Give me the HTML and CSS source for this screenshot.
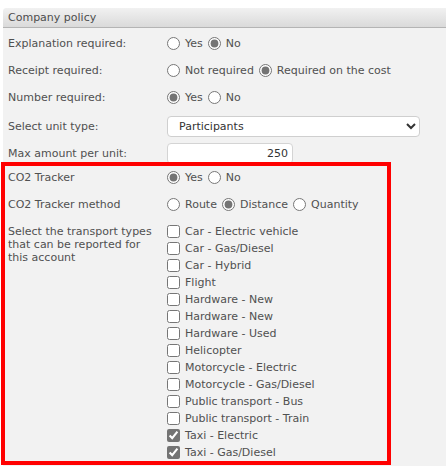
FILE: index.html
```html
<!DOCTYPE html>
<html lang="en">
<head>
  <meta charset="UTF-8">
  <meta name="viewport" content="width=device-width, initial-scale=1.0">
  <title>Company policy</title>
  <link rel="stylesheet" href="styles.css">
</head>
<body>
  <div class="panel">
    <div class="panel-head">Company policy</div>
    <div class="panel-body">
      <div class="row h27">
        <div class="label">Explanation required:</div>
        <div class="field">
          <label class="opt"><input type="radio" name="expl"> Yes</label>
          <label class="opt"><input type="radio" name="expl" checked> No</label>
        </div>
      </div>
      <div class="row h27">
        <div class="label">Receipt required:</div>
        <div class="field">
          <label class="opt"><input type="radio" name="receipt"> Not required</label>
          <label class="opt"><input type="radio" name="receipt" checked> Required on the cost</label>
        </div>
      </div>
      <div class="row h27">
        <div class="label">Number required:</div>
        <div class="field">
          <label class="opt"><input type="radio" name="number" checked> Yes</label>
          <label class="opt"><input type="radio" name="number"> No</label>
        </div>
      </div>
      <div class="row h31">
        <div class="label">Select unit type:</div>
        <div class="field">
          <select class="unit-select">
            <option>Participants</option>
          </select>
        </div>
      </div>
      <div class="row h22">
        <div class="label">Max amount per unit:</div>
        <div class="field">
          <input class="amount" type="text" value="250">
        </div>
      </div>
      <div class="row h26">
        <div class="label">CO2 Tracker</div>
        <div class="field">
          <label class="opt"><input type="radio" name="co2" checked> Yes</label>
          <label class="opt"><input type="radio" name="co2"> No</label>
        </div>
      </div>
      <div class="row h28">
        <div class="label">CO2 Tracker method</div>
        <div class="field">
          <label class="opt"><input type="radio" name="method"> Route</label>
          <label class="opt"><input type="radio" name="method" checked> Distance</label>
          <label class="opt"><input type="radio" name="method"> Quantity</label>
        </div>
      </div>
      <div class="row top">
        <div class="label multi">Select the transport types that can be reported for this account</div>
        <div class="checklist">
          <label class="check"><input type="checkbox"> Car - Electric vehicle</label>
          <label class="check"><input type="checkbox"> Car - Gas/Diesel</label>
          <label class="check"><input type="checkbox"> Car - Hybrid</label>
          <label class="check"><input type="checkbox"> Flight</label>
          <label class="check"><input type="checkbox"> Hardware - New</label>
          <label class="check"><input type="checkbox"> Hardware - New</label>
          <label class="check"><input type="checkbox"> Hardware - Used</label>
          <label class="check"><input type="checkbox"> Helicopter</label>
          <label class="check"><input type="checkbox"> Motorcycle - Electric</label>
          <label class="check"><input type="checkbox"> Motorcycle - Gas/Diesel</label>
          <label class="check"><input type="checkbox"> Public transport - Bus</label>
          <label class="check"><input type="checkbox"> Public transport - Train</label>
          <label class="check"><input type="checkbox" checked> Taxi - Electric</label>
          <label class="check"><input type="checkbox" checked> Taxi - Gas/Diesel</label>
        </div>
      </div>
    </div>
  </div>

  <!-- annotation frame around the CO2 section -->
  <div class="highlight"></div>
</body>
</html>
```

FILE: styles.css
```css
body {
  margin: 0;
  padding: 8px 0 0 3px;
  background: #fff;
  font-family: "DejaVu Sans", Verdana, sans-serif;
  font-size: 11px;
  color: #505050;
  overflow: hidden;
}
.panel {
  background-color: #f2f2f2;
  border-top-left-radius: 4px;
  min-height: 470px;
}
.panel-head {
  height: 19px;
  line-height: 19px;
  padding-left: 5px;
  color: #4d4d4d;
  background: linear-gradient(#f1f1f1, #dadada);
  border-bottom: 1px solid #b4b4b4;
  border-top-left-radius: 4px;
}
.panel-body {
  padding: 2px 0 0 5px;
}
.row {
  display: grid;
  grid-template-columns: 159px 1fr;
  align-items: center;
}
.row.top {
  align-items: start;
  padding-top: 5px;
}
.h27 { height: 27px; }
.h31 { height: 31px; }
.h22 { height: 22px; }
.h26 { height: 26px; }
.h28 { height: 28px; }
.label {
  padding-right: 8px;
}
.label.multi {
  line-height: 13px;
  padding-top: 2px;
}
.field {
  display: flex;
  align-items: center;
  gap: 5px;
}
.opt, .check {
  display: inline-flex;
  align-items: center;
  gap: 5px;
}
input[type="radio"], input[type="checkbox"] {
  width: 13px;
  height: 13px;
  margin: 0;
  accent-color: #747474;
}
.checklist {
  display: flex;
  flex-direction: column;
}
.check {
  height: 17px;
}
.unit-select {
  width: 253px;
  height: 21px;
  padding: 0 0 0 7px;
  border: 1px solid #cfcfcf;
  border-radius: 4px;
  background-color: #fff;
  color: #333;
  font-family: inherit;
  font-size: 11px;
}
.amount {
  width: 126px;
  height: 21px;
  box-sizing: border-box;
  padding: 0 4px 0 4px;
  border: 1px solid #d4d4d4;
  border-radius: 4px;
  background-color: #fff;
  color: #333;
  text-align: right;
  font-family: inherit;
  font-size: 11px;
}
.highlight {
  position: absolute;
  left: 1px;
  top: 162px;
  width: 382px;
  height: 295px;
  border: 4px solid #ff0000;
  pointer-events: none;
}
```
